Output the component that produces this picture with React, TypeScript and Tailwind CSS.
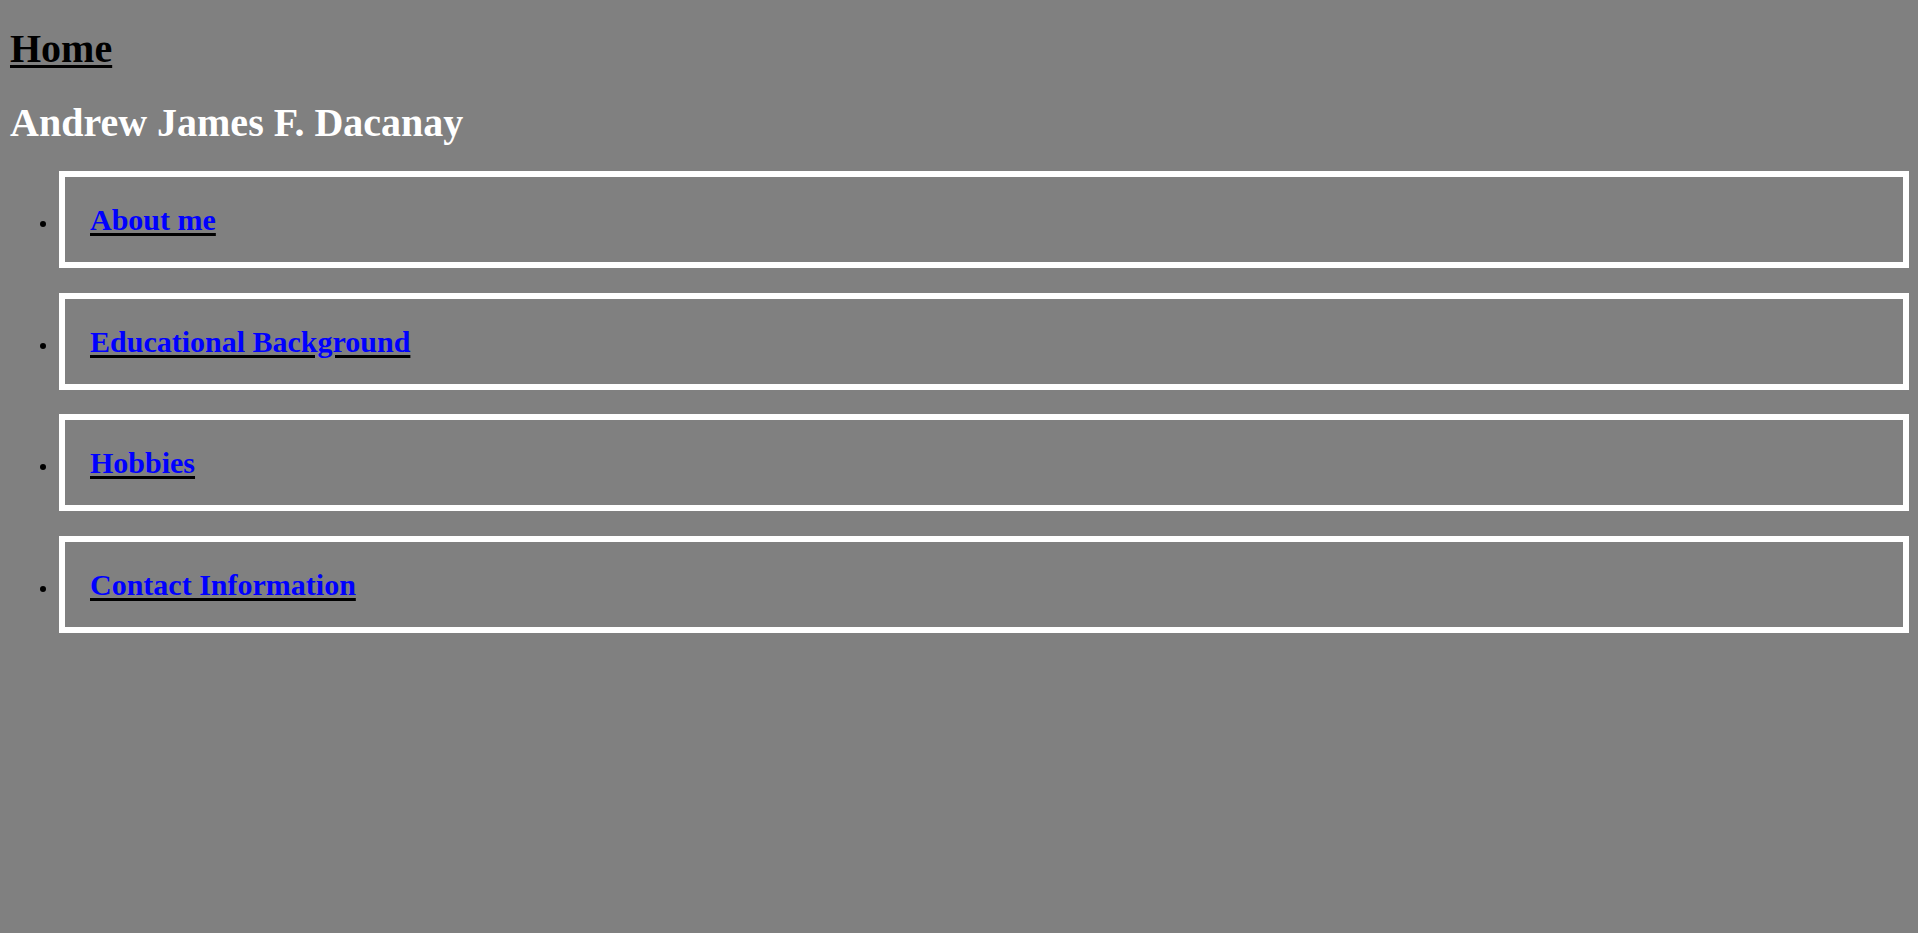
const links = ["About me", "Educational Background", "Hobbies", "Contact Information"];

export default function App() {
  return (
    <div className="min-h-screen bg-[#808080] pl-[10px] pr-[9px] pt-[26px] font-['Liberation_Serif',serif]">
      <h1 className="text-[40px] font-bold leading-[46px] text-black underline decoration-black decoration-[3px] underline-offset-[3px]">
        Home
      </h1>
      <h1 className="mt-[28px] text-[40px] font-bold leading-[46px] text-white">
        Andrew James F. Dacanay
      </h1>
      <ul className="mt-[25px] flex flex-col gap-[24.67px]">
        {links.map((label) => (
          <li key={label} className="flex items-start">
            <span className="ml-[30px] mr-[13px] mt-[50px] h-[6px] w-[6px] shrink-0 rounded-full bg-black" />
            <div className="flex-1 border-[6px] border-white py-[25px] pl-[25px]">
              <h2 className="text-[30px] font-bold leading-[35px]">
                <a
                  href="#"
                  className="text-[#0000ff] underline decoration-black decoration-[3px] underline-offset-[3px]"
                >
                  {label}
                </a>
              </h2>
            </div>
          </li>
        ))}
      </ul>
    </div>
  );
}
